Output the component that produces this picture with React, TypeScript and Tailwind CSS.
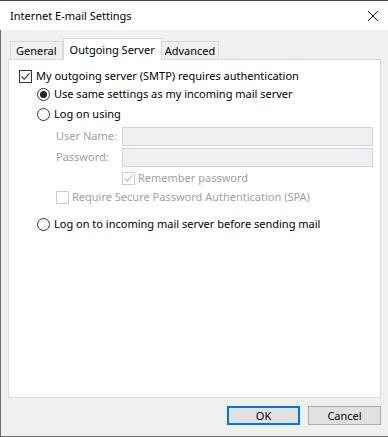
import React from 'react';

const font = { fontFamily: '"Noto Sans", "Open Sans", sans-serif' };

const CheckBox = ({ checked, disabled }: { checked?: boolean; disabled?: boolean }) => (
  <span
    className={`w-[13px] h-[13px] shrink-0 border flex items-center justify-center ${disabled ? 'border-[#cccccc] bg-white' : 'border-[#333333] bg-white'}`}
  >
    {checked && (
      <svg width="11" height="11" viewBox="0 0 11 11">
        <path d="M1.5 5.5 L4.2 8.3 L9.6 2.2" fill="none" stroke={disabled ? '#b8b8b8' : '#222222'} strokeWidth="1.1" />
      </svg>
    )}
  </span>
);

const Radio = ({ checked }: { checked?: boolean }) => (
  <span className="w-[13px] h-[13px] shrink-0 rounded-full border border-[#333333] bg-white flex items-center justify-center">
    {checked && <span className="w-[7px] h-[7px] rounded-full bg-[#222222]" />}
  </span>
);

export default function App() {
  return (
    <div className="w-[388px] h-[437px] flex flex-col text-[11px] text-black bg-white whitespace-nowrap" style={font}>
      <div className="h-px bg-[#4a4a4a]" />

      {/* Title bar */}
      <div className="h-[29px] bg-white flex items-center justify-between pl-[10px] pr-[9px]">
        <span className="text-[11px] leading-none">Internet E-mail Settings</span>
        <svg width="12" height="12" viewBox="0 0 12 12">
          <path d="M1 1 L11 11 M11 1 L1 11" stroke="#111111" strokeWidth="1" />
        </svg>
      </div>

      {/* Body */}
      <div className="flex-1 bg-[#f0f0f0] border-l border-b border-[#6a6a6a] flex flex-col">
        {/* Tabs */}
        <div className="flex items-end pl-[9px] pt-[7px] h-[29px]">
          <div className="h-[18px] px-[5px] border border-b-0 border-[#d9d9d9] flex items-center leading-none">General</div>
          <div className="h-[22px] px-[6px] bg-white border border-b-0 border-[#d9d9d9] flex items-center leading-none -mb-px relative z-10">
            Outgoing Server
          </div>
          <div className="h-[18px] px-[3px] border border-b-0 border-l-0 border-[#d9d9d9] flex items-center leading-none">Advanced</div>
        </div>

        {/* Panel */}
        <div className="ml-[7px] mr-[7px] h-[339px] bg-white border border-[#d9d9d9] flex flex-col pt-[8px]">
          <div className="flex items-center gap-[4px] pl-[10px] h-[16px]">
            <CheckBox checked />
            <span>My outgoing server (SMTP) requires authentication</span>
          </div>

          <div className="flex flex-col pl-[28px]">
            <div className="flex items-center gap-[4px] h-[20px]">
              <Radio checked />
              <span>Use same settings as my incoming mail server</span>
            </div>
            <div className="flex items-center gap-[4px] h-[20px]">
              <Radio />
              <span>Log on using</span>
            </div>

            <div className="flex flex-col pl-[19px] text-[#a0a0a0] mt-[2px]">
              <div className="flex items-center h-[21px]">
                <span className="w-[66px] shrink-0">User Name:</span>
                <div className="flex-1 h-[19px] mr-[7px] bg-[#f0f0f0] border border-[#ccd6e2]" />
              </div>
              <div className="flex items-center h-[21px]">
                <span className="w-[66px] shrink-0">Password:</span>
                <div className="flex-1 h-[19px] mr-[7px] bg-[#f0f0f0] border border-[#ccd6e2]" />
              </div>
              <div className="flex items-center gap-[3px] h-[20px] pl-[66px]">
                <CheckBox checked disabled />
                <span>Remember password</span>
              </div>
              <div className="flex items-center gap-[3px] h-[19px]">
                <CheckBox disabled />
                <span>Require Secure Password Authentication (SPA)</span>
              </div>
            </div>

            <div className="flex items-center gap-[4px] h-[20px] mt-[7px]">
              <Radio />
              <span>Log on to incoming mail server before sending mail</span>
            </div>
          </div>
        </div>

        {/* Buttons */}
        <div className="flex justify-end gap-[8px] pr-[7px] pt-[8px]">
          <button className="w-[73px] h-[19px] bg-[#e1e1e1] border-2 border-[#0078d7] flex items-center justify-center leading-none">
            OK
          </button>
          <button className="w-[73px] h-[19px] bg-[#e1e1e1] border border-[#adadad] flex items-center justify-center leading-none">
            Cancel
          </button>
        </div>
      </div>
    </div>
  );
}
